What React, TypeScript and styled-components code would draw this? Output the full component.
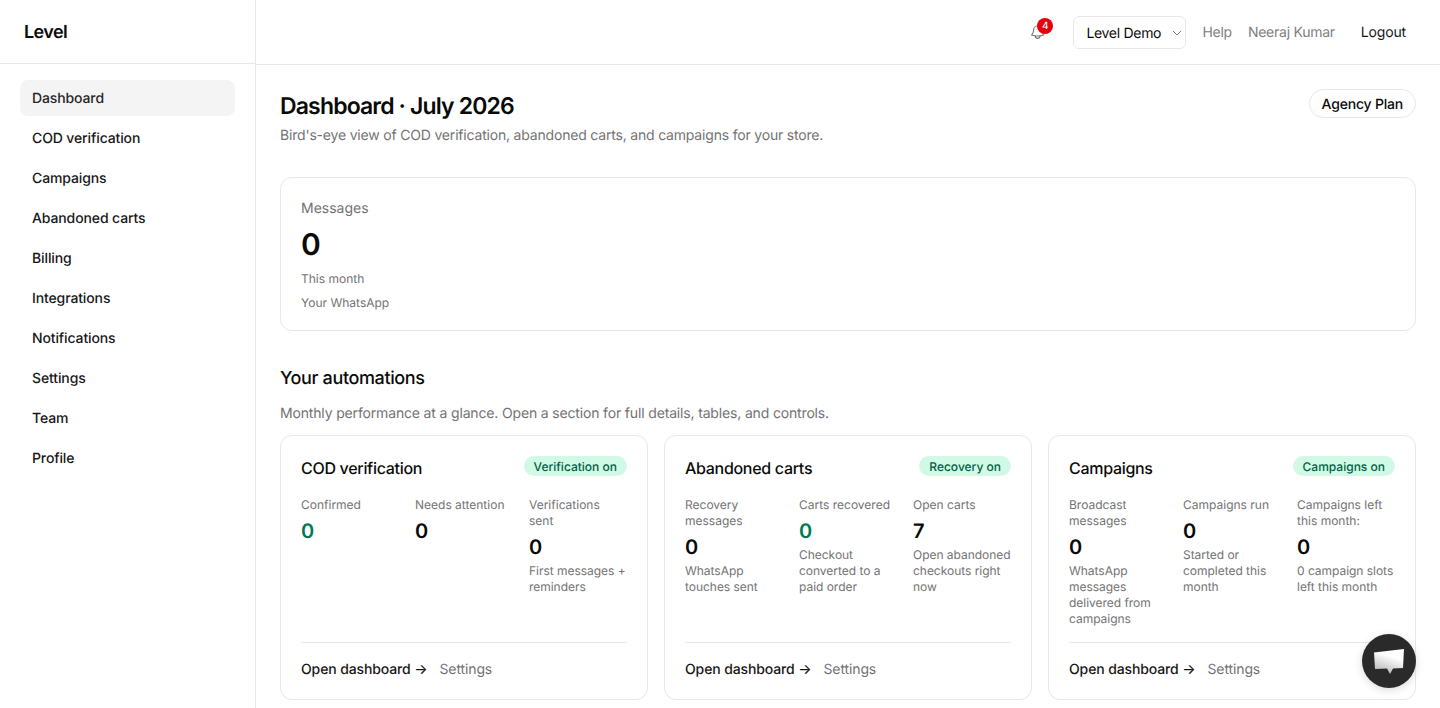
import { createGlobalStyle, styled } from "styled-components";

const GlobalStyle = createGlobalStyle`
  html, body {
    margin: 0;
    height: 100%;
    overflow: hidden;
    background: #ffffff;
    color: #0a0a0a;
    font-family: Inter, "Liberation Sans", sans-serif;
    text-rendering: geometricPrecision;
  }
  * { box-sizing: border-box; }
`;

const Shell = styled.div`
  display: flex;
  height: 708px;
  overflow: hidden;
`;

const Sidebar = styled.aside`
  width: 256px;
  flex-shrink: 0;
  border-right: 1px solid #e8e8e8;
`;

const Brand = styled.div`
  height: 64px;
  padding: 2px 24px 0;
  display: flex;
  align-items: center;
  border-bottom: 1px solid #e8e8e8;
  font-size: 18px;
  font-weight: 600;
  letter-spacing: -0.6px;
`;

const Nav = styled.nav`
  display: flex;
  flex-direction: column;
  gap: 4px;
  padding: 16px 20px;
`;

const NavItem = styled.a<{ $active?: boolean }>`
  height: 36px;
  padding: 0 12px;
  display: flex;
  align-items: center;
  border-radius: 8px;
  font-size: 14px;
  font-weight: 500;
  letter-spacing: -0.12px;
  color: ${(p) => (p.$active ? "#262626" : "#171717")};
  background: ${(p) => (p.$active ? "#f4f4f4" : "transparent")};
`;

const Column = styled.div`
  flex: 1;
  min-width: 0;
`;

const Topbar = styled.header`
  height: 65px;
  padding: 0 34px 0 24px;
  display: flex;
  align-items: center;
  justify-content: flex-end;
  border-bottom: 1px solid #e8e8e8;
`;

const Bell = styled.div`
  position: relative;
  width: 18px;
  height: 18px;
  margin-right: 26px;
  color: #737373;
`;

const Badge = styled.span`
  position: absolute;
  top: -5px;
  left: 8px;
  width: 16px;
  height: 16px;
  border-radius: 50%;
  background: #e7000b;
  color: #fff;
  font-size: 10px;
  font-weight: 500;
  display: flex;
  align-items: center;
  justify-content: center;
`;

const StoreSelect = styled.div`
  width: 113px;
  height: 33px;
  padding: 2px 3px 0 12px;
  margin-right: 16px;
  display: flex;
  align-items: center;
  justify-content: space-between;
  border: 1px solid #e8e8e8;
  border-radius: 6px;
  font-size: 14px;
  letter-spacing: -0.3px;
  color: #0a0a0a;
`;

const TopLink = styled.a<{ $dark?: boolean }>`
  font-size: 14px;
  letter-spacing: ${(p) => (p.$dark ? "-0.17px" : "-0.25px")};
  color: ${(p) => (p.$dark ? "#171717" : "#808080")};
  margin-left: ${(p) => (p.$dark ? "10px" : "0")};
  margin-right: ${(p) => (p.$dark ? "0" : "16px")};
`;

const Main = styled.main`
  padding: 24px;
`;

const PageHead = styled.div`
  display: flex;
  justify-content: space-between;
  align-items: flex-start;
  margin-bottom: 31px;
`;

const Title = styled.h1`
  margin: 0;
  height: 32px;
  padding-top: 1px;
  font-size: 23px;
  line-height: 32px;
  font-weight: 600;
  letter-spacing: -0.85px;
`;

const Subtitle = styled.p`
  margin: 5px 0 0;
  font-size: 14px;
  line-height: 20px;
  letter-spacing: -0.19px;
  color: #737373;
`;

const PlanPill = styled.span`
  height: 29px;
  padding: 1px 12px 0;
  display: flex;
  align-items: center;
  border: 1px solid #e8e8e8;
  border-radius: 999px;
  font-size: 14px;
  font-weight: 500;
  letter-spacing: -0.2px;
`;

const Card = styled.section`
  border: 1px solid #e8e8e8;
  border-radius: 12px;
  background: #fff;
`;

const MessagesCard = styled(Card)`
  height: 154px;
  padding: 21px 20px 20px;
  margin-bottom: 34px;
`;

const MessagesLabel = styled.div`
  font-size: 14px;
  line-height: 20px;
  color: #737373;
`;

const MessagesValue = styled.div`
  margin-top: 8px;
  font-size: 30px;
  line-height: 36px;
  font-weight: 600;
`;

const MessagesNote = styled.div`
  margin-top: 8px;
  font-size: 12px;
  line-height: 16px;
  color: #737373;
`;

const SectionTitle = styled.h2`
  margin: 0;
  font-size: 18px;
  line-height: 28px;
  font-weight: 500;
  letter-spacing: -0.37px;
`;

const SectionText = styled.p`
  margin: 11px 0 11px;
  font-size: 14px;
  line-height: 20px;
  letter-spacing: -0.16px;
  color: #737373;
`;

const CardGrid = styled.div`
  display: grid;
  grid-template-columns: repeat(3, 1fr);
  gap: 16px;
`;

const AutomationCard = styled(Card)`
  height: 265px;
  padding: 20px;
  display: flex;
  flex-direction: column;
`;

const CardHead = styled.div`
  display: flex;
  justify-content: space-between;
  align-items: flex-start;
  margin-bottom: 17px;
`;

const CardTitle = styled.h3`
  margin: 0;
  font-size: 16px;
  line-height: 24px;
  font-weight: 500;
  letter-spacing: -0.3px;
`;

const StatusPill = styled.span`
  height: 20px;
  padding: 0 10px;
  display: flex;
  align-items: center;
  border-radius: 999px;
  background: #d0fae5;
  color: #006045;
  font-size: 12px;
  font-weight: 500;
`;

const Stats = styled.div`
  flex: 1;
  display: grid;
  grid-template-columns: repeat(3, 1fr);
  column-gap: 16px;
  align-content: start;
`;

const StatLabel = styled.div`
  font-size: 12px;
  line-height: 16px;
  color: #737373;
`;

const StatValue = styled.div<{ $good?: boolean }>`
  margin-top: 4px;
  font-size: 20px;
  line-height: 28px;
  font-weight: 600;
  color: ${(p) => (p.$good ? "#007a55" : "#0a0a0a")};
`;

const StatNote = styled.div`
  margin-top: 2px;
  font-size: 12px;
  line-height: 16px;
  letter-spacing: -0.03px;
  color: #737373;
`;

const CardFoot = styled.div`
  height: 37px;
  padding-top: 17px;
  display: flex;
  align-items: center;
  gap: 12px;
  border-top: 1px solid #e8e8e8;
  font-size: 14px;
`;

const OpenLink = styled.a`
  font-weight: 500;
  letter-spacing: -0.12px;
  color: #171717;
`;

const SettingsLink = styled.a`
  letter-spacing: -0.12px;
  color: #737373;
`;

const ChatButton = styled.button`
  position: fixed;
  right: 24px;
  bottom: 20px;
  width: 54px;
  height: 54px;
  padding: 0;
  border: 0;
  border-radius: 50%;
  background: #2a2a2a;
  box-shadow: 0 2px 8px rgba(0, 0, 0, 0.15);
  display: flex;
  align-items: center;
  justify-content: center;
`;

const navItems = [
  "Dashboard",
  "COD verification",
  "Campaigns",
  "Abandoned carts",
  "Billing",
  "Integrations",
  "Notifications",
  "Settings",
  "Team",
  "Profile",
];

type Stat = { label: string; value: string; note?: string; good?: boolean };

const automations: { title: string; status: string; stats: Stat[] }[] = [
  {
    title: "COD verification",
    status: "Verification on",
    stats: [
      { label: "Confirmed", value: "0", good: true },
      { label: "Needs attention", value: "0" },
      { label: "Verifications sent", value: "0", note: "First messages + reminders" },
    ],
  },
  {
    title: "Abandoned carts",
    status: "Recovery on",
    stats: [
      { label: "Recovery messages", value: "0", note: "WhatsApp touches sent" },
      { label: "Carts recovered", value: "0", note: "Checkout converted to a paid order", good: true },
      { label: "Open carts", value: "7", note: "Open abandoned checkouts right now" },
    ],
  },
  {
    title: "Campaigns",
    status: "Campaigns on",
    stats: [
      { label: "Broadcast messages", value: "0", note: "WhatsApp messages delivered from campaigns" },
      { label: "Campaigns run", value: "0", note: "Started or completed this month" },
      { label: "Campaigns left this month:", value: "0", note: "0 campaign slots left this month" },
    ],
  },
];

function BellIcon() {
  return (
    <svg width="18" height="18" viewBox="0 0 24 24" fill="none" stroke="currentColor" strokeWidth="1.5" strokeLinecap="round" strokeLinejoin="round">
      <path d="M14.86 17.08a24 24 0 0 0 4.64-1.08A9 9 0 0 1 18 11V9.7A6 6 0 0 0 6 9.75V11a9 9 0 0 1-2.5 5 24 24 0 0 0 4.63 1.08m6.73 0a24 24 0 0 1-6.73 0m6.73 0a3 3 0 1 1-6.73 0" />
    </svg>
  );
}

function Chevron() {
  return (
    <svg width="10" height="10" viewBox="0 0 10 10" fill="none" stroke="#777" strokeWidth="1">
      <path d="M1 3 5 7l4-4" />
    </svg>
  );
}

function ChatIcon() {
  return (
    <svg width="30" height="25" viewBox="0 0 30 25">
      <defs>
        <linearGradient id="bubble" x1="0.7" y1="0" x2="0.3" y2="1">
          <stop offset="0.3" stopColor="#ffffff" />
          <stop offset="1" stopColor="#b5b5b5" />
        </linearGradient>
      </defs>
      <path d="M0 3.5 30 0l-1 19-10 .5-3 5.5-3-5.5L1 20z" fill="url(#bubble)" />
    </svg>
  );
}

export default function App() {
  return (
    <Shell>
      <GlobalStyle />
      <Sidebar>
        <Brand>Level</Brand>
        <Nav>
          {navItems.map((item, i) => (
            <NavItem key={item} $active={i === 0}>{item}</NavItem>
          ))}
        </Nav>
      </Sidebar>
      <Column>
        <Topbar>
          <Bell>
            <BellIcon />
            <Badge>4</Badge>
          </Bell>
          <StoreSelect>
            Level Demo
            <Chevron />
          </StoreSelect>
          <TopLink>Help</TopLink>
          <TopLink>Neeraj Kumar</TopLink>
          <TopLink $dark>Logout</TopLink>
        </Topbar>
        <Main>
          <PageHead>
            <div>
              <Title>Dashboard · July 2026</Title>
              <Subtitle>Bird's-eye view of COD verification, abandoned carts, and campaigns for your store.</Subtitle>
            </div>
            <PlanPill>Agency Plan</PlanPill>
          </PageHead>
          <MessagesCard>
            <MessagesLabel>Messages</MessagesLabel>
            <MessagesValue>0</MessagesValue>
            <MessagesNote>This month</MessagesNote>
            <MessagesNote>Your WhatsApp</MessagesNote>
          </MessagesCard>
          <SectionTitle>Your automations</SectionTitle>
          <SectionText>Monthly performance at a glance. Open a section for full details, tables, and controls.</SectionText>
          <CardGrid>
            {automations.map((a) => (
              <AutomationCard key={a.title}>
                <CardHead>
                  <CardTitle>{a.title}</CardTitle>
                  <StatusPill>{a.status}</StatusPill>
                </CardHead>
                <Stats>
                  {a.stats.map((s) => (
                    <div key={s.label}>
                      <StatLabel>{s.label}</StatLabel>
                      <StatValue $good={s.good}>{s.value}</StatValue>
                      {s.note && <StatNote>{s.note}</StatNote>}
                    </div>
                  ))}
                </Stats>
                <CardFoot>
                  <OpenLink>Open dashboard →</OpenLink>
                  <SettingsLink>Settings</SettingsLink>
                </CardFoot>
              </AutomationCard>
            ))}
          </CardGrid>
        </Main>
      </Column>
      <ChatButton>
        <ChatIcon />
      </ChatButton>
    </Shell>
  );
}
